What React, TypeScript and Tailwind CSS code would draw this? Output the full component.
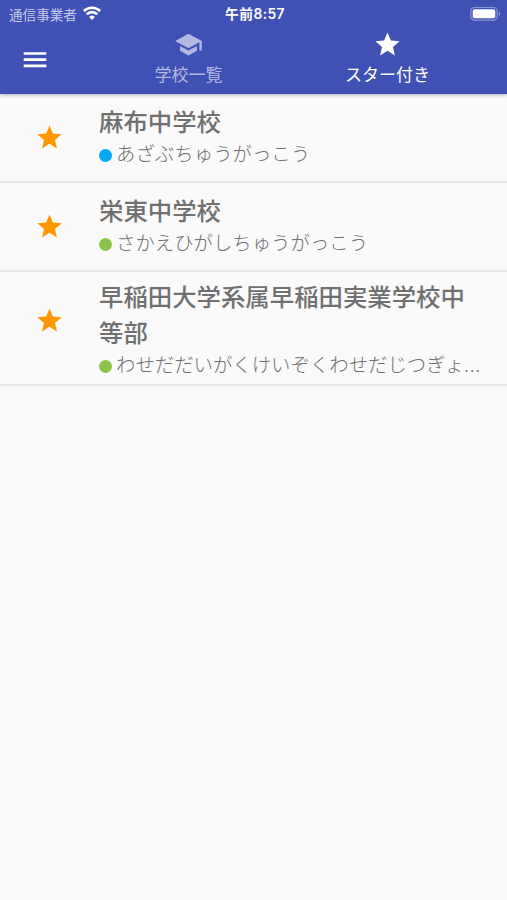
type School = { name: string; kana: string; clipped?: boolean; dot: string; row: string; star: string };

const schools: School[] = [
  { name: '麻布中学校', kana: 'あざぶちゅうがっこう', dot: 'bg-[#03a9f4]', row: 'h-[89px] pt-[9px]', star: 'pt-5' },
  { name: '栄東中学校', kana: 'さかえひがしちゅうがっこう', dot: 'bg-[#8bc34a]', row: 'h-[89px] pt-[9px]', star: 'pt-5' },
  {
    name: '早稲田大学系属早稲田実業学校中等部',
    kana: 'わせだだいがくけいぞくわせだじつぎょ',
    clipped: true,
    dot: 'bg-[#8bc34a]',
    row: 'h-[114px] pt-[6px]',
    star: 'pt-[28px]',
  },
];

function Star({ className }: { className: string }) {
  return (
    <svg viewBox="0 0 24 24" fill="currentColor" className={className}>
      <path d="M12 17.27 18.18 21l-1.64-7.03L22 9.24l-7.19-.61L12 2 9.19 8.63 2 9.24l5.46 4.73L5.82 21z" />
    </svg>
  );
}

function StatusBar() {
  return (
    <div className="grid h-[27px] grid-cols-3 items-center pl-[9px] pr-[6px] text-[13.6px] leading-[27px]">
      <div className="flex items-center gap-[6px]">
        <span className="whitespace-nowrap text-[#c5cae9]">通信事業者</span>
        <svg viewBox="0 0 18 14" className="mb-[2px] h-[14px] w-[18px]" fill="none" stroke="white" strokeWidth="2.7">
          <path d="M.9 5.1a11.5 11.5 0 0 1 16.2 0" />
          <path d="M3.7 8.4a7.4 7.4 0 0 1 10.6 0" />
          <path d="M9 13.9 6.1 11a4.1 4.1 0 0 1 5.8 0z" fill="white" stroke="none" />
        </svg>
      </div>
      <span className="whitespace-nowrap pt-px text-center font-['Inter','Noto_Sans_CJK_JP',sans-serif] text-[13.8px] font-semibold tracking-[0.4px] text-white">
        午前8:57
      </span>
      <svg viewBox="0 0 31 14" className="h-[14px] w-[31px] justify-self-end">
        <rect x=".8" y=".5" width="26.4" height="12.6" rx="3.8" fill="none" stroke="#8c96d2" strokeWidth="1.2" />
        <rect x="2.7" y="2.3" width="22.6" height="9" rx="2" fill="white" />
        <path d="M28.8 4.6c2 .8 2 3.6 0 4.4z" fill="#8c96d2" />
      </svg>
    </div>
  );
}

export default function App() {
  return (
    <div className="flex h-[900px] w-[507px] flex-col overflow-hidden bg-[#fafafa] font-['Noto_Sans_CJK_JP',sans-serif]">
      <header className="z-10 h-[94px] shrink-0 bg-[#3f51b5] shadow-[0_1px_4px_rgba(0,0,0,0.3)]">
        <StatusBar />
        <div className="flex h-[67px] pr-5">
          <button className="flex w-[89px] items-start pl-[21px] pt-[19px] text-white" aria-label="menu">
            <svg viewBox="0 0 24 24" fill="currentColor" className="size-7">
              <path d="M2.3 18.2h19.4v-2.3H2.3zm0-5.3h19.4v-2.3H2.3zm0-7.6v2.3h19.4V5.3z" />
            </svg>
          </button>
          <button className="flex flex-1 flex-col items-center pt-[3px] text-[#b2b9e1]">
            <svg viewBox="0 0 24 24" fill="currentColor" className="size-[29px]">
              <path d="M5 13.18v4L12 21l7-3.82v-4L12 17zM12 3 1 9l11 6 9-4.91V17h2V9z" />
            </svg>
            <span className="mt-[3px] text-[17px] leading-6">学校一覧</span>
          </button>
          <button className="flex flex-1 flex-col items-center pt-[3px] text-white">
            <Star className="size-[29px]" />
            <span className="mt-[3px] text-[17px] leading-6">スター付き</span>
          </button>
        </div>
      </header>
      <main>
        {schools.map((s) => (
          <section key={s.name} className={`flex border-b-2 border-[#e8e8e8] ${s.row}`}>
            <div className={`flex w-[99px] shrink-0 items-start justify-center text-[#ff9800] ${s.star}`}>
              <Star className="size-[29px]" />
            </div>
            <div className="min-w-0 flex-1 pr-[20px]">
              <h2 className="pr-[5px] text-[24.4px] font-medium leading-9 text-[#707070]">{s.name}</h2>
              <div className="-ml-[0.5px] flex items-center gap-[4.5px]">
                <i className={`mt-1 size-[13px] shrink-0 rounded-full ${s.dot}`} />
                <p className="whitespace-nowrap text-[19.4px] font-light leading-7 text-[#707070]">
                  {s.kana}
                  {s.clipped && <span className="tracking-[0.8px]">...</span>}
                </p>
              </div>
            </div>
          </section>
        ))}
      </main>
    </div>
  );
}
